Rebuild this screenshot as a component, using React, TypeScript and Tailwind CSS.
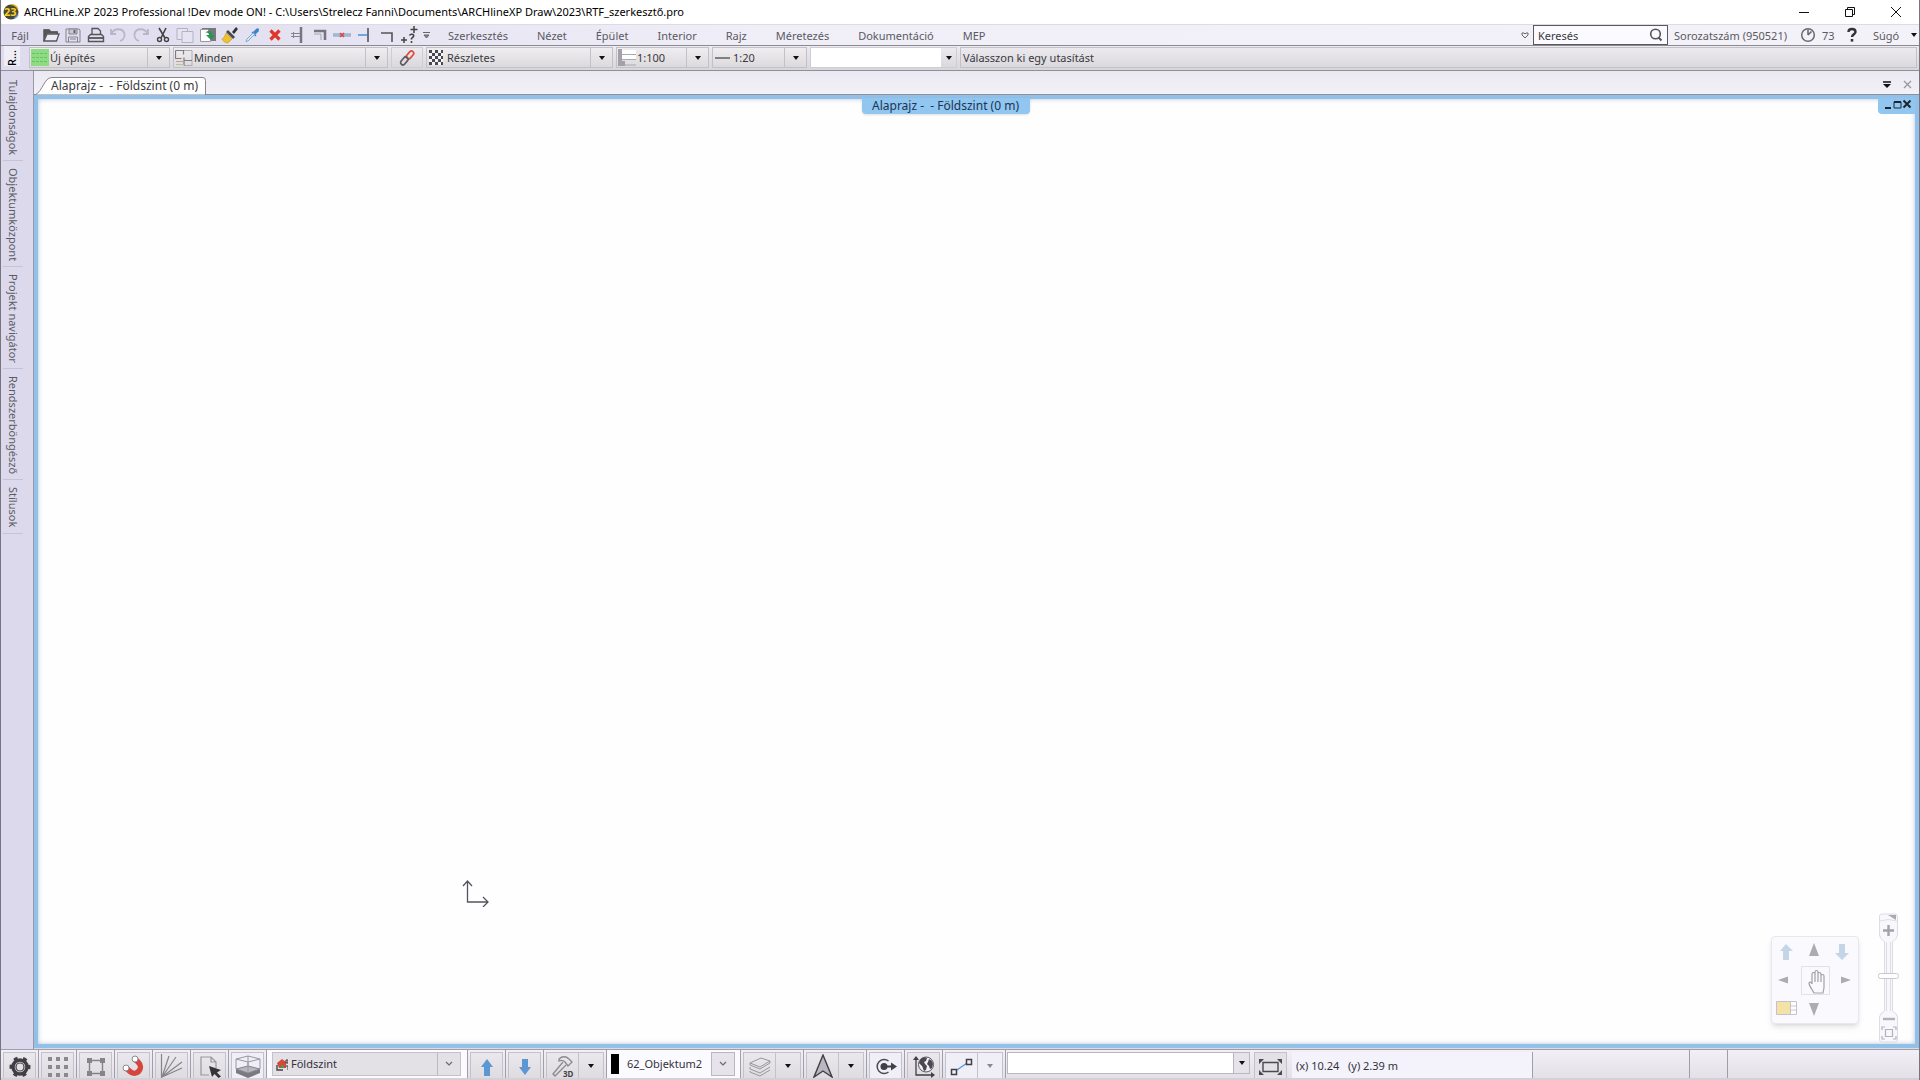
import React from 'react'
import clsx from 'clsx'

type SvgProps = {
    w?: number
    h?: number
    children: React.ReactNode
}

const Svg: React.FC<SvgProps> = ({ w = 18, h = 18, children }) => (
    <svg
        width={w}
        height={h}
        viewBox={`0 0 ${w} ${h}`}
        fill="none"
        className="shrink-0"
        aria-hidden="true"
    >
        {children}
    </svg>
)

const Caret = ({ color = '#111' }: { color?: string }) => (
    <Svg w={8} h={6}>
        <path d="M1 1h6L4 5z" fill={color} />
    </Svg>
)

const quickTools = [
    {
        label: 'Megnyitás',
        icon: (
            <>
                <path d="M2 15V4h5l2 2h6v2" stroke="#555" strokeWidth="1.5" />
                <path d="M2 15L5 8h12l-2.500 7z" fill="#eceaf5" stroke="#555" strokeWidth="1.300" />
                <path d="M2 3.500h5l1.500 2H16v2H5L2 13z" fill="#555" />
            </>
        ),
    },
    {
        label: 'Mentés',
        icon: (
            <>
                <path d="M2 3h13l1 1v12H2z" stroke="#85848c" />
                <path d="M5 3h8v5H5z" fill="#c9c8d0" stroke="#85848c" />
                <path d="M10.500 4v3" stroke="#666" strokeWidth="2" />
                <path d="M4.500 16v-5h9v5M6 13h6" stroke="#85848c" />
            </>
        ),
    },
    {
        label: 'Nyomtatás',
        icon: (
            <>
                <path d="M5 8V2.500h6L13.500 5v3" stroke="#555" strokeWidth="1.300" />
                <path d="M1.500 15.500v-5l2-2h11l2 2v5z" stroke="#555" strokeWidth="1.400" />
                <path d="M2 12h14" stroke="#555" strokeWidth="1.800" />
            </>
        ),
    },
    {
        label: 'Visszavonás',
        icon: (
            <path
                d="M2 3v5h5M2.500 7.500C5 2 14 1.500 15.500 8c.5 3-1.500 6-4.500 7"
                stroke="#b9b7c6"
                strokeWidth="1.800"
            />
        ),
    },
    {
        label: 'Újra',
        icon: (
            <path
                d="M16 3v5h-5M15.500 7.500C13 2 4 1.500 2.500 8c-.5 3 1.500 6 4.500 7"
                stroke="#b9b7c6"
                strokeWidth="1.800"
            />
        ),
    },
    {
        label: 'Kivágás',
        icon: (
            <>
                <path d="M5 2l6 10M12 2L7 12" stroke="#444" strokeWidth="1.600" />
                <circle cx="5.500" cy="13.500" r="2" stroke="#444" strokeWidth="1.400" />
                <circle cx="12.500" cy="13.500" r="2" stroke="#444" strokeWidth="1.400" />
            </>
        ),
    },
    {
        label: 'Másolás',
        icon: (
            <>
                <path d="M1 2.500h10.500v11H1z" fill="#e6e4f0" stroke="#b3b2c0" />
                <path d="M6 5.500h11v11H6z" fill="#e6e4f0" stroke="#b3b2c0" />
            </>
        ),
    },
    {
        label: 'Beillesztés',
        icon: (
            <>
                <path d="M3 2h14v13H3z" fill="#77797c" />
                <path d="M1.500 3.500h7l3 3v9h-10z" fill="#fff" stroke="#999" />
                <path d="M6 7c4-4 8-1 7 2h3l-4 5-5-5h3c0-2-2-3-4-2z" fill="#2e9155" />
            </>
        ),
    },
    {
        label: 'Formátummásoló',
        icon: (
            <>
                <path d="M11 6l4-5 2 2-4 5z" fill="#333" />
                <path d="M7 4l7 7-2 2-7-7z" fill="#4a4a4a" />
                <path d="M5 7l6 6-4 4c-3 0-5-2-6-4 2-1 3-3 4-6z" fill="#edc22f" stroke="#c9961d" strokeWidth=".6" />
            </>
        ),
    },
    {
        label: 'Pipetta',
        icon: (
            <>
                <path d="M10 6l3-3c2-2 4 0 2.500 2.500l-3 3z" fill="#3a86c8" />
                <path d="M9 6l4 4" stroke="#3a86c8" strokeWidth="1.500" />
                <path d="M10 7l1.500 1.500L5 15l-2 .5.500-2z" fill="#dbe8f5" stroke="#7da6cc" />
            </>
        ),
    },
    {
        label: 'Törlés',
        icon: (
            <path d="M4.500 4.500l9 9M13.500 4.500l-9 9" stroke="#e03529" strokeWidth="3.200" />
        ),
    },
    {
        label: 'Metszés',
        icon: (
            <>
                <path d="M13 1v16" stroke="#77767e" strokeWidth="2.500" />
                <path d="M3 7.500h9M3 10.500h9M5.500 6v6" stroke="#85848c" />
            </>
        ),
    },
    {
        label: 'Sarok',
        icon: (
            <>
                <path d="M3 5h11v9" stroke="#77767e" strokeWidth="2.600" />
                <path d="M3 8h7v6" stroke="#a5a4ad" />
            </>
        ),
    },
    {
        label: 'Felosztás',
        icon: (
            <>
                <path d="M0 9h18" stroke="#7b9bbd" strokeWidth="3" />
                <path d="M0 9h18" stroke="#bfd5ea" />
                <path d="M7 7l4 4M11 7l-4 4" stroke="#d8463c" strokeWidth="1.600" />
            </>
        ),
    },
    {
        label: 'Meghosszabbítás',
        icon: (
            <>
                <path d="M3 9h9" stroke="#4a9be0" strokeWidth="1.600" />
                <path d="M13 2v14" stroke="#555" strokeWidth="1.600" />
            </>
        ),
    },
    {
        label: 'Összekötés',
        icon: <path d="M3 7h11v9" stroke="#555" strokeWidth="1.600" />,
    },
    {
        label: 'Pozíció',
        icon: (
            <>
                <path d="M14 0v7M10.500 3.500h7M4 11v6M1 14h6" stroke="#444" strokeWidth="1.500" />
                <path d="M9.500 9.500c1-2 5-1.500 4 1l-2 2v1M11.500 15v2" stroke="#444" strokeWidth="1.600" />
            </>
        ),
    },
]

const menus = [
    'Szerkesztés',
    'Nézet',
    'Épület',
    'Interior',
    'Rajz',
    'Méretezés',
    'Dokumentáció',
    'MEP',
]

const sidePanels = [
    'Tulajdonságok',
    'Objektumközpont',
    'Projekt navigátor',
    'Rendszerböngésző',
    'Stílusok',
]

const TitleBar = () => (
    <header className="flex h-6 shrink-0 items-center bg-white pl-[2px] text-black">
        <Svg w={16} h={16}>
            <circle cx="8" cy="8" r="7.500" fill="#4a4734" />
            <path d="M8 .5a7.500 7.500 0 0 1 7 5" stroke="#e0b323" strokeWidth="1.400" />
            <path d="M11 14.500a7.500 7.500 0 0 0 4-4" stroke="#5a9bc9" strokeWidth="1.600" />
            <text x="1" y="12" fontSize="11" fontWeight="700" fill="#f4cf2a">
                23
            </text>
        </Svg>
        <h1 className="ml-[5px] flex-1">
            ARCHLine.XP 2023 Professional !Dev mode ON! - C:\Users\Strelecz
            Fanni\Documents\ARCHlineXP Draw\2023\RTF_szerkesztő.pro
        </h1>
        <button aria-label="Kis méret" className="flex w-[46px] justify-center">
            <Svg w={12} h={12}>
                <path d="M1 6.500h10" stroke="#111" />
            </Svg>
        </button>
        <button aria-label="Előző méret" className="flex w-[46px] justify-center">
            <Svg w={12} h={12}>
                <path d="M1.500 3.500h7v7h-7zM3.500 3V1.500h7v7H9" stroke="#111" />
            </Svg>
        </button>
        <button aria-label="Bezárás" className="flex w-[46px] justify-center">
            <Svg w={12} h={12}>
                <path d="M1 1l10 10M11 1L1 11" stroke="#111" />
            </Svg>
        </button>
    </header>
)

const MenuBar = () => (
    <nav className="flex h-[22px] shrink-0 items-center border-t border-b border-t-[#dddce6] border-b-[#8b8992] bg-linear-to-r from-[#dedcee] via-[#f0eef7] via-40% to-[#f4f2f9] text-[#5b5a62]">
        <button className="w-[39px] pt-px pr-px">Fájl</button>
        <div className="flex w-[380px] justify-between">
            {quickTools.map((tool) => (
                <button
                    key={tool.label}
                    aria-label={tool.label}
                    className="flex w-[22px] justify-center"
                >
                    <Svg>{tool.icon}</Svg>
                </button>
            ))}
        </div>
        <button aria-label="Testreszabás" className="mr-[18px] ml-[3px]">
            <Svg w={7} h={7}>
                <path d="M0 .5h7M1 3h5L3.500 6z" stroke="#666" fill="#888" />
            </Svg>
        </button>
        <div className="flex flex-1 gap-[29px] pt-[2px]">
            {menus.map((menu) => (
                <button key={menu}>{menu}</button>
            ))}
        </div>
        <button aria-label="Keresési lehetőségek" className="mr-1">
            <Svg w={8} h={7}>
                <path d="M1 1h2l1 1 1-1h2v2L4 6 1 3z" stroke="#666" />
            </Svg>
        </button>
        <label className="flex h-5 w-[135px] items-center border border-[#5a5960] bg-[#fbfaff] pr-1 pl-1">
            <input
                aria-label="Keresés"
                defaultValue="Keresés"
                className="min-w-0 flex-1 bg-transparent pt-[2px] text-[#3a3940] outline-none"
            />
            <Svg w={14} h={14}>
                <circle cx="6.500" cy="6" r="4.800" stroke="#555" strokeWidth="1.600" />
                <path d="M9.500 9.500l3 3" stroke="#555" strokeWidth="2" />
            </Svg>
        </label>
        <span className="ml-[6px] w-[126px] pt-px">Sorozatszám (950521)</span>
        <Svg w={16} h={16}>
            <circle cx="8" cy="8" r="6.300" stroke="#6a6970" strokeWidth="1.500" />
            <path d="M8 8V2.500M8 8l3.500-3.500" stroke="#6a6970" strokeWidth="1.600" />
        </Svg>
        <span className="ml-[6px] w-[25px] pt-px">73</span>
        <button aria-label="Segítség">
            <Svg w={10} h={16}>
                <path d="M1.500 5C1.500 1 8.500 1 8.500 5c0 2-3.500 2.500-3.500 5" stroke="#333" strokeWidth="2.400" />
                <path d="M3.700 12h2.600v2.600H3.700z" fill="#333" />
            </Svg>
        </button>
        <button className="ml-4 w-[37px] pt-px text-left">Súgó</button>
        <span className="mr-px">
            <Caret />
        </span>
    </nav>
)

type ComboProps = {
    label: string
    value: string
    icon: React.ReactNode
    className: string
}

const Combo: React.FC<ComboProps> = ({ label, value, icon, className }) => (
    <label
        className={clsx(
            'flex h-[21px] items-center border border-[#c3c1c8] bg-linear-to-b from-[#efedf0] to-[#dcdadd]',
            className
        )}
    >
        <span className="flex w-5 shrink-0 pl-px">{icon}</span>
        <select
            aria-label={label}
            className="h-full min-w-0 flex-1 appearance-none border-r border-[#c3c1c8] bg-transparent pt-px"
        >
            <option>{value}</option>
        </select>
        <span className="pointer-events-none flex w-[21px] justify-center">
            <Caret />
        </span>
    </label>
)

const ToolBar = () => (
    <div className="flex h-[25px] shrink-0 border-b border-[#918f97] bg-linear-to-b from-[#eeecf1] to-[#d8d6da] text-[#3a3940]">
        <div className="flex w-[28px] shrink-0 justify-center bg-[#dedcee] pr-[7px]">
            <button className="h-5 w-4 rotate-180 bg-[#efedf6] text-left leading-4 font-medium text-black [writing-mode:vertical-rl]">
                R...
            </button>
        </div>
        <div className="flex flex-1 gap-[3px] pt-px pr-[2px]">
            <Combo
                label="Fázis"
                value="Új építés"
                className="w-[141px]"
                icon={
                    <Svg w={18} h={17}>
                        <path d="M0 0h18v17H0z" fill="#8ddb83" />
                        <path
                            d="M1 4.500h16M1 8.500h16M1 12.500h16"
                            stroke="#6cc266"
                            strokeDasharray="3 1"
                        />
                    </Svg>
                }
            />
            <Combo
                label="Szűrő"
                value="Minden"
                className="w-[215px]"
                icon={
                    <Svg w={18} h={18}>
                        <path d="M9 1.500h8v15H9" stroke="#aeadb4" />
                        <path d="M.5 1.500h8v4M.5 1.500v8h6M9 8.500v3h8M9 11.500v5" stroke="#7d7c83" strokeWidth="1.200" />
                        <path d="M1 12.500h8" stroke="#d09a88" />
                        <path d="M1 15.500h8" stroke="#a9c6a5" />
                    </Svg>
                }
            />
            <button
                aria-label="Csatolás"
                className="flex h-[21px] w-[32px] items-center justify-center border border-[#cfcdd4]"
            >
                <Svg w={16} h={16}>
                    <rect x="6.500" y="2.700" width="9" height="4.600" rx="2.300" transform="rotate(-50 11 5)" stroke="#df4a3c" strokeWidth="1.700" />
                    <rect x="1" y="8.500" width="9" height="4.600" rx="2.300" transform="rotate(-50 5.500 11)" stroke="#5c5b60" strokeWidth="1.700" />
                </Svg>
            </button>
            <Combo
                label="Részletesség"
                value="Részletes"
                className="w-[187px]"
                icon={
                    <Svg w={16} h={15}>
                        <path d="M1 0h14v15H1z" fill="#f5f4f6" />
                        <path
                            d="M1 1.500h14M1 7.500h14M1 13.500h14"
                            stroke="#4a494f"
                            strokeWidth="3"
                            strokeDasharray="3 3"
                        />
                        <path
                            d="M4 4.500h11M4 10.500h11"
                            stroke="#4a494f"
                            strokeWidth="3"
                            strokeDasharray="3 3"
                        />
                    </Svg>
                }
            />
            <Combo
                label="Lépték"
                value="1:100"
                className="w-[93px]"
                icon={
                    <Svg w={18} h={17}>
                        <path d="M0 0h4v12h3v5H0z" fill="#a3a2a8" />
                        <path d="M4 1h14v4H4zM4 6h14v4H4z" fill="#fff" />
                        <path d="M4 5.500h14M4 10.500h14M7 16h11" stroke="#aaa9af" />
                    </Svg>
                }
            />
            <Combo
                label="Vonallépték"
                value="1:20"
                className="w-[95px]"
                icon={
                    <Svg w={18} h={6}>
                        <path d="M1 3h15" stroke="#555" strokeWidth="1.400" />
                    </Svg>
                }
            />
            <label className="flex h-[21px] w-[147px] border border-[#cfcdd4]">
                <input
                    aria-label="Parancs"
                    className="min-w-0 flex-1 bg-white outline-none"
                />
                <span className="flex w-[15px] items-center justify-center">
                    <Caret />
                </span>
            </label>
            <p className="h-[21px] flex-1 border border-[#c3c1c8] pl-[2px] leading-[19px]">
                Válasszon ki egy utasítást
            </p>
        </div>
    </div>
)

const SideBar = () => (
    <aside className="flex w-[33px] shrink-0 flex-col items-start border-r border-[#9a98a6] bg-[#dcd9ed] pt-[2px] pl-[2px]">
        {sidePanels.map((panel) => (
            <button
                key={panel}
                className="w-5 border-b border-[#c6c4d4] pt-[7px] pb-[5px] text-left leading-5 text-[#5b5a62] [writing-mode:vertical-rl]"
            >
                {panel}
            </button>
        ))}
    </aside>
)

const TabStrip = () => (
    <div className="flex h-6 shrink-0 items-end border-b border-[#918f97] bg-linear-to-b from-[#eae8f1] to-[#f3f1f7]">
        <button className="relative ml-px h-[17px] w-[171px] pl-4 text-left text-xs text-[#3a3940]">
            <svg
                width="171"
                height="18"
                className="absolute top-0 left-0"
                aria-hidden="true"
            >
                <path d="M0 18C8 14 9 .5 17 .5h151q2.500 0 2.500 3V18z" fill="#fff" stroke="#85838b" />
            </svg>
            <span className="relative whitespace-pre">{'Alaprajz -  - Földszint (0 m)'}</span>
        </button>
        <div className="mb-[5px] ml-auto flex items-center gap-3 pr-[7px]">
            <button aria-label="Ablaklista">
                <Svg w={8} h={8}>
                    <path d="M0 1h8" stroke="#111" strokeWidth="1.500" />
                    <path d="M0 3h8L4 7z" fill="#111" />
                </Svg>
            </button>
            <button aria-label="Lap bezárása">
                <Svg w={9} h={9}>
                    <path d="M1 1l7 7M8 1L1 8" stroke="#99979f" strokeWidth="1.300" />
                </Svg>
            </button>
        </div>
    </div>
)

const NavPad = () => (
    <div className="h-[88px] w-[88px] rounded-sm border border-[#e9e7ee] bg-[#fafafe] shadow-md">
        <svg width="86" height="86" viewBox="0 -2 86 86" fill="none" aria-hidden="true">
            <path d="M14 5l7 7h-4v9h-6v-9H8z" fill="#c3d5e6" />
            <path d="M70 21l-7-7h4V5h6v9h4z" fill="#c3d5e6" />
            <path d="M42 4l5 13H37zM42 77l5-13H37zM6 41l10-3.500v7zM79 41l-10-3.500v7z" fill="#adacb5" />
            <path d="M29.500 27.500h28v28h-28z" stroke="#e2e0ea" />
            <path
                d="M42 54c-2-4-5-7-5-10 1-2 3 0 3 1V35c0-2 3-2 3 0v-2c0-2 3-2 3 0v2c0-2 3-2 3 0v2c0-2 3-2 3 0v11c0 3-1 4-1 6zM43 35v8M46 35v8M49 36v7"
                stroke="#a2a1aa"
                strokeWidth="1.200"
            />
            <path d="M4.500 62.500h20v13h-20z" fill="#fff" stroke="#c4c2cd" />
            <path d="M5 63h13v12H5z" fill="#f5e2a6" />
            <path d="M18.500 63v12M18 67h6M18 71h6" stroke="#c4c2cd" />
        </svg>
    </div>
)

const ZoomSlider = () => (
    <svg width="22" height="130" viewBox="0 0 22 130" fill="none" aria-hidden="true">
        <path
            d="M1.500 3q0-2 3-2h12q3 0 3 3v18q0 3-5 7v69q5 3 5 6v23q0 2-3 2h-12q-3 0-3-2v-23q0-3 5-6V29q-5-4-5-7z"
            fill="#f8f7fc"
            stroke="#dddbe4"
        />
        <path d="M10 2h8v5z" fill="#aaa9b0" />
        <path d="M2 8q8-3 17 0M8.500 29v69M12.500 29v69" stroke="#dfdde6" />
        <path d="M10.500 12v11M5 17.500h11" stroke="#a3a2aa" strokeWidth="2.400" />
        <rect x=".5" y="60.500" width="20" height="5" rx="2" fill="#fff" stroke="#c9c7d1" />
        <path d="M5 106h12" stroke="#b3b1bb" strokeWidth="2.400" />
        <path d="M7.500 116.500h7v7h-7zM4 117v-3h3M15 114h3v3M18 123v3h-3M7 126H4v-3" stroke="#b3b1bb" strokeWidth="1.200" />
    </svg>
)

const Drawing = () => (
    <main className="relative min-h-0 flex-1 border-4 border-[#91c1e8] bg-[#fefefe]">
        <div className="absolute inset-0 shadow-[inset_0_0_5px_#b9c4d2]" />
        <div className="absolute inset-x-0 -top-px flex justify-center pr-[62px]">
            <h2 className="w-[168px] rounded-b-sm bg-[#91c6f0] text-center text-xs leading-4 whitespace-pre text-[#1c3550] shadow-sm">
                {'Alaprajz -  - Földszint (0 m)'}
            </h2>
        </div>
        <div className="absolute -top-px right-0 flex h-4 w-[37px] items-center justify-center rounded-bl-sm bg-[#91c6f0] pb-1">
            <button aria-label="Nézet kis méret">
                <Svg w={11} h={11}>
                    <path d="M3 9h6" stroke="#1c2530" strokeWidth="2" />
                </Svg>
            </button>
            <button aria-label="Nézet teljes méret">
                <Svg w={9} h={9}>
                    <path d="M1 2h7v6H1z" stroke="#1c2530" />
                    <path d="M1 2h7" stroke="#1c2530" strokeWidth="2" />
                </Svg>
            </button>
            <button aria-label="Nézet bezárása">
                <Svg w={10} h={10}>
                    <path d="M1.500 1.500l7 7M8.500 1.500l-7 7" stroke="#1c2530" strokeWidth="2" />
                </Svg>
            </button>
        </div>
        <div className="absolute bottom-[137px] left-[424px]">
            <Svg w={28} h={28}>
                <path d="M5.500 2v21H26M1 7l4.500-5L10 7M21 18l5 5-5 5" stroke="#55545c" strokeWidth="1.300" />
            </Svg>
        </div>
        <div className="absolute right-[56px] bottom-5">
            <NavPad />
        </div>
        <div className="absolute right-[15px] bottom-px">
            <ZoomSlider />
        </div>
    </main>
)

type CellProps = {
    label: string
    children: React.ReactNode
    arrow?: boolean
    muted?: boolean
    lit?: boolean
}

const Cell: React.FC<CellProps> = ({ label, children, arrow, muted, lit }) => (
    <div className="flex h-full shrink-0 border-l border-[#a09ea8] px-[2px] pt-[2px] first:border-l-0">
        <button
            aria-label={label}
            className={clsx(
                'flex w-[33px] items-center justify-center border border-b-0 border-[#c3c1c9]',
                lit || muted ? 'bg-[#f0eef6]' : 'bg-linear-to-b from-[#eae8ed] to-[#dedce1]'
            )}
        >
            {children}
        </button>
        {arrow && (
            <button
                aria-label={`${label} lista`}
                className={clsx(
                    'flex w-[25px] items-center justify-center border border-b-0 border-l-0 border-[#c3c1c9]',
                    muted ? 'bg-[#f0eef6]' : 'bg-linear-to-b from-[#eae8ed] to-[#dedce1]'
                )}
            >
                <Caret color={muted ? '#8a8990' : '#111'} />
            </button>
        )}
    </div>
)

const Chevron = () => (
    <Svg w={8} h={6}>
        <path d="M1 1l3 3 3-3" stroke="#6a6970" strokeWidth="1.200" />
    </Svg>
)

const StatusBar = () => (
    <footer className="flex h-[31px] shrink-0 border-t border-b-2 border-t-[#a09ea8] border-b-[#d3d1d5] bg-linear-to-b from-[#f2f0f6] to-[#e3e1e7] text-[#33323a]">
        <Cell label="Beállítások">
            <Svg w={24} h={24}>
                <circle cx="12" cy="13" r="7" stroke="#3f3f45" strokeWidth="3.500" />
                <circle cx="12" cy="13" r="4" fill="#e3e1e7" stroke="#3f3f45" strokeWidth="1.200" />
                <circle cx="12" cy="13" r="9.200" stroke="#3f3f45" strokeWidth="2.600" strokeDasharray="4 5.630" transform="rotate(-12 12 13)" />
            </Svg>
        </Cell>
        <Cell label="Háló">
            <Svg w={22} h={22}>
                <path
                    d="M1 4h20M1 12h20M1 20h20"
                    stroke="#8a8990"
                    strokeWidth="4"
                    strokeDasharray="4 4"
                />
            </Svg>
        </Cell>
        <Cell label="Keret">
            <Svg w={22} h={22}>
                <path d="M4.500 5.500h13v13h-13z" stroke="#85848c" strokeWidth="1.400" />
                <path d="M2 3h5v5H2zM15 3h5v5h-5zM2 16h5v5H2zM15 16h5v5h-5z" fill="#85848c" />
            </Svg>
        </Cell>
        <Cell label="Mágnes">
            <Svg w={24} h={24}>
                <path d="M12.500 4.500l4 4A6 6 0 0 1 8 17.500l-4.500-4" stroke="#d6453c" strokeWidth="5.500" />
                <circle cx="13" cy="5" r="3" fill="#fff" stroke="#8a8990" />
                <circle cx="4" cy="14" r="3" fill="#fff" stroke="#8a8990" />
            </Svg>
        </Cell>
        <Cell label="Szögek">
            <Svg w={24} h={24}>
                <path d="M1.500 0v24M2 23L9 2M2 23L16 3M2 23L22 8M2 23l20-9" stroke="#85848c" strokeWidth="1.200" />
            </Svg>
        </Cell>
        <Cell label="Kijelölés">
            <Svg w={24} h={24}>
                <path d="M11 21H3V3h10l5 5v6M13 3v5h5" stroke="#98979f" strokeWidth="1.200" />
                <path d="M11 12l12 4-4 2.500 4 4-2.500 1.500-4-4-2.500 3z" fill="#33333a" />
            </Svg>
        </Cell>
        <Cell label="3D terület" lit>
            <Svg w={26} h={24}>
                <path d="M1 15v4l12 5 12-5v-4l-12 4z" fill="#7b7a82" />
                <path d="M1 15l12-3 12 3-12 4z" fill="#b9b8bf" stroke="#85848c" />
                <path d="M1 15V5l12-3 12 3v10M1 5l12 3 12-3M13 8v11M13 2v10" stroke="#98979f" />
            </Svg>
        </Cell>
        <div className="flex w-[201px] shrink-0 border-l border-[#a09ea8] bg-[#fbfaff] pt-[2px] pl-[5px]">
            <label className="flex h-6 w-[189px] items-center border border-[#c3c1c9] bg-[#e3e1e6] pl-[3px]">
                <Svg w={12} h={13}>
                    <path d="M1 5l5-4 4 3v6H3z" fill="#d8453b" />
                    <path d="M1 7v5h6" stroke="#444" strokeWidth="1.400" />
                    <path d="M5 7h3v3H5z" fill="#3f9a57" />
                    <path d="M10 2h2v3h-2zM10 8h2v4" stroke="#333" />
                </Svg>
                <select
                    aria-label="Szint"
                    className="ml-[3px] h-full min-w-0 flex-1 appearance-none border-r border-[#b9b7c0]"
                >
                    <option>Földszint</option>
                </select>
                <span className="flex w-[22px] justify-center">
                    <Chevron />
                </span>
            </label>
        </div>
        <Cell label="Szint fel">
            <Svg w={14} h={20}>
                <path d="M7 3l6 8h-3v9H4v-9H1z" fill="#5b97d3" />
            </Svg>
        </Cell>
        <Cell label="Szint le">
            <Svg w={14} h={20}>
                <path d="M7 19l6-8h-3V3H4v8H1z" fill="#5b97d3" />
            </Svg>
        </Cell>
        <Cell label="3D építés" arrow>
            <Svg w={24} h={24}>
                <path d="M12 8L2 20l2 2L15 11" stroke="#8a8990" strokeWidth="1.300" />
                <path d="M8 5c3-3 7-3 10 0l3 3-4 4-3-4c-2-2-4-2-6-1z" stroke="#8a8990" strokeWidth="1.300" />
                <text x="12" y="23" fontSize="8" fontWeight="700" fill="#44434a">
                    3D
                </text>
            </Svg>
        </Cell>
        <div className="flex w-[134px] shrink-0 border-l border-[#a09ea8] bg-[#fbfaff] pt-[2px]">
            <label className="flex h-6 flex-1 items-center pr-[5px] pl-1">
                <span className="h-5 w-2 bg-black" />
                <select
                    aria-label="Fólia"
                    className="ml-2 h-full min-w-0 flex-1 appearance-none"
                >
                    <option>62_Objektum2</option>
                </select>
                <span className="flex h-full w-6 shrink-0 items-center justify-center border border-[#b9b7c0] bg-[#e6e4ea]">
                    <Chevron />
                </span>
            </label>
        </div>
        <Cell label="Fóliák" arrow>
            <Svg w={22} h={22}>
                <path d="M1 8l11-5 9 3-10 6zM1 8v2l10 4 10-6V6M1 12v2l10 4 10-6M1 16v1l10 4 10-6" stroke="#98979f" />
            </Svg>
        </Cell>
        <Cell label="Északi irány" arrow>
            <Svg w={20} h={24}>
                <path d="M10 1L1 23l9-6 9 6z" fill="#b9b8c0" stroke="#3f3f45" strokeWidth="1.400" />
            </Svg>
        </Cell>
        <Cell label="Irány" lit>
            <Svg w={24} h={20}>
                <path d="M14.500 5a7 7 0 1 0 0 11" stroke="#4a4950" strokeWidth="1.500" />
                <circle cx="10" cy="10.500" r="3.500" fill="#3f3f45" />
                <path d="M10 10.500h9" stroke="#3f3f45" strokeWidth="2" />
                <path d="M17 6.500l6 4-6 4z" fill="#3f3f45" />
            </Svg>
        </Cell>
        <Cell label="Földrajzi hely">
            <Svg w={24} h={24}>
                <path d="M4 4v17h17" stroke="#3f3f45" strokeWidth="1.300" />
                <path d="M1 6l3-4 3 4zM19 18l4 3-4 3z" fill="#3f3f45" />
                <circle cx="14" cy="10.500" r="7.500" fill="#f2f0f6" stroke="#55545b" />
                <path d="M8 6c2-3 5-3 7-2l-1 3-2 1 1 2 2 2-1 4-2 1c-1-2-1-3-2-5l-3-3zM17 5l3 2 1 3-1 4-2 1-1-3-2-2 1-2z" fill="#4a4950" />
            </Svg>
        </Cell>
        <Cell label="Vonallánc" arrow muted>
            <Svg w={24} h={22}>
                <path d="M4 17L20 6" stroke="#5b97e0" strokeWidth="1.400" />
                <path d="M1.500 14.500h5v5h-5zM16.500 4.500h5v5h-5z" fill="#f0eef6" stroke="#3f3f45" strokeWidth="1.500" />
            </Svg>
        </Cell>
        <div className="flex w-[249px] shrink-0 border-l border-[#a09ea8] pt-[2px] pl-px">
            <label className="flex h-[22px] w-[243px] border border-[#b9b7c0]">
                <input
                    aria-label="Parancssor"
                    className="min-w-0 flex-1 bg-white outline-none"
                />
                <span className="flex w-4 items-center justify-center border-l border-[#b9b7c0] bg-[#e6e4ea]">
                    <Caret />
                </span>
            </label>
        </div>
        <button
            aria-label="Teljes nézet"
            className="mt-[2px] flex w-[33px] shrink-0 items-center justify-center border border-b-0 border-[#c3c1c9] bg-[#e3e1e6]"
        >
            <Svg w={24} h={22}>
                <path d="M4 7.500h15v9H4z" stroke="#4a4950" strokeWidth="1.400" />
                <path d="M0 4h5L0 9zM23 4h-5l5 5zM0 20h5l-5-5zM23 20h-5l5-5z" fill="#4a4950" />
            </Svg>
        </button>
        <p className="mt-[2px] ml-[5px] flex w-[241px] shrink-0 items-center border-r border-[#a09ea8] bg-[#f4f2fb] pt-[2px] pl-1 whitespace-pre">
            {'(x) 10.24   (y) 2.39 m'}
        </p>
        <div className="w-[157px] shrink-0 border-r border-[#a09ea8]" />
        <div className="w-[38px] shrink-0 border-r border-[#a09ea8]" />
    </footer>
)

const App = () => {
    return (
        <div className="flex h-screen flex-col overflow-hidden border-x border-[#77757f] bg-[#eeecf4] font-['Noto_Sans',sans-serif] text-[11px] leading-4">
            <TitleBar />
            <MenuBar />
            <ToolBar />
            <div className="flex min-h-0 flex-1">
                <SideBar />
                <div className="flex min-w-0 flex-1 flex-col">
                    <TabStrip />
                    <Drawing />
                    <div className="h-px shrink-0 bg-[#dcdae2]" />
                </div>
            </div>
            <StatusBar />
        </div>
    )
}

export default App
